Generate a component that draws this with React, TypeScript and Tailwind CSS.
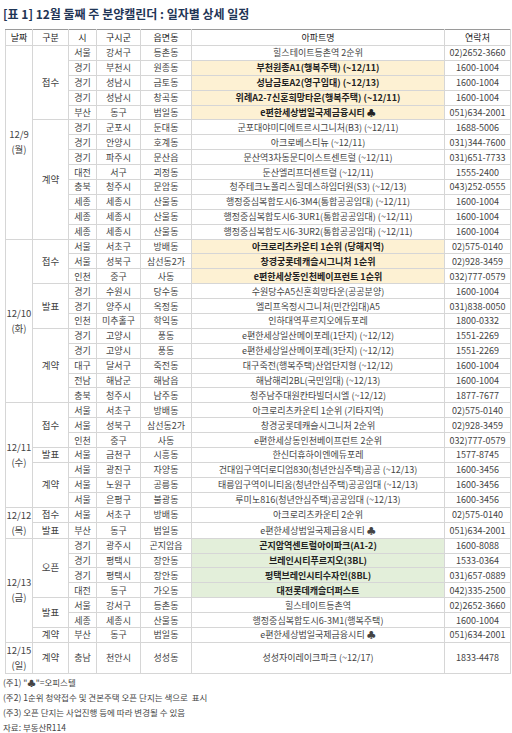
import React from 'react';

type Row = { si: string; gu: string; dong: string; name: string; tel: string; hl?: 'y' | 'g' };
type Sub = { kind: string; rows: Row[] };
type Group = { date: string; day: string; subs: Sub[]; tall?: boolean };

const r = (si: string, gu: string, dong: string, name: string, tel: string, hl?: 'y' | 'g'): Row => ({ si, gu, dong, name, tel, hl });

const groups: Group[] = [
  {
    date: '12/9',
    day: '(월)',
    subs: [
      {
        kind: '접수',
        rows: [
          r('서울', '강서구', '등촌동', '힐스테이트등촌역 2순위', '02)2652-3660'),
          r('경기', '부천시', '원종동', '부천원종A1(행복주택) (~12/11)', '1600-1004', 'y'),
          r('경기', '성남시', '금토동', '성남금토A2(영구임대) (~12/13)', '1600-1004', 'y'),
          r('경기', '성남시', '창곡동', '위례A2-7신혼희망타운(행복주택) (~12/11)', '1600-1004', 'y'),
          r('부산', '동구', '범일동', 'e편한세상범일국제금융시티 ♣', '051)634-2001', 'y'),
        ],
      },
      {
        kind: '계약',
        rows: [
          r('경기', '군포시', '둔대동', '군포대야미디에트르시그니처(B3) (~12/11)', '1688-5006'),
          r('경기', '안양시', '호계동', '아크로베스티뉴 (~12/11)', '031)344-7600'),
          r('경기', '파주시', '문산읍', '문산역3차동문디이스트센트럴 (~12/11)', '031)651-7733'),
          r('대전', '서구', '괴정동', '둔산엘리프더센트럴 (~12/11)', '1555-2400'),
          r('충북', '청주시', '문암동', '청주테크노폴리스힐데스하임더원(S3) (~12/13)', '043)252-0555'),
          r('세종', '세종시', '산울동', '행정중심복합도시6-3M4(통합공공임대) (~12/11)', '1600-1004'),
          r('세종', '세종시', '산울동', '행정중심복합도시6-3UR1(통합공공임대) (~12/11)', '1600-1004'),
          r('세종', '세종시', '산울동', '행정중심복합도시6-3UR2(통합공공임대) (~12/11)', '1600-1004'),
        ],
      },
    ],
  },
  {
    date: '12/10',
    day: '(화)',
    subs: [
      {
        kind: '접수',
        rows: [
          r('서울', '서초구', '방배동', '아크로리츠카운티 1순위 (당해지역)', '02)575-0140', 'y'),
          r('서울', '성북구', '삼선동2가', '창경궁롯데캐슬시그니처 1순위', '02)928-3459', 'y'),
          r('인천', '중구', '사동', 'e편한세상동인천베이프런트 1순위', '032)777-0579', 'y'),
        ],
      },
      {
        kind: '발표',
        rows: [
          r('경기', '수원시', '당수동', '수원당수A5신혼희망타운(공공분양)', '1600-1004'),
          r('경기', '양주시', '옥정동', '엘리프옥정시그니처(민간임대)A5', '031)838-0050'),
          r('인천', '미추홀구', '학익동', '인하대역푸르지오에듀포레', '1800-0332'),
        ],
      },
      {
        kind: '계약',
        rows: [
          r('경기', '고양시', '풍동', 'e편한세상일산메이포레(1단지) (~12/12)', '1551-2269'),
          r('경기', '고양시', '풍동', 'e편한세상일산메이포레(3단지) (~12/12)', '1551-2269'),
          r('대구', '달서구', '죽전동', '대구죽전(행복주택)산업단지형 (~12/12)', '1600-1004'),
          r('전남', '해남군', '해남읍', '해남해리2BL(국민임대) (~12/13)', '1600-1004'),
          r('충북', '청주시', '남주동', '청주남주대원칸타빌더시엘 (~12/12)', '1877-7677'),
        ],
      },
    ],
  },
  {
    date: '12/11',
    day: '(수)',
    subs: [
      {
        kind: '접수',
        rows: [
          r('서울', '서초구', '방배동', '아크로리츠카운티 1순위 (기타지역)', '02)575-0140'),
          r('서울', '성북구', '삼선동2가', '창경궁롯데캐슬시그니처 2순위', '02)928-3459'),
          r('인천', '중구', '사동', 'e편한세상동인천베이프런트 2순위', '032)777-0579'),
        ],
      },
      {
        kind: '발표',
        rows: [r('서울', '금천구', '시흥동', '한신더휴하이엔에듀포레', '1577-8745')],
      },
      {
        kind: '계약',
        rows: [
          r('서울', '광진구', '자양동', '건대입구역더로디엄830(청년안심주택)공공 (~12/13)', '1600-3456'),
          r('서울', '노원구', '공릉동', '태릉입구역이니티움(청년안심주택)공공임대 (~12/13)', '1600-3456'),
          r('서울', '은평구', '불광동', '루미노816(청년안심주택)공공임대 (~12/13)', '1600-3456'),
        ],
      },
    ],
  },
  {
    date: '12/12',
    day: '(목)',
    subs: [
      { kind: '접수', rows: [r('서울', '서초구', '방배동', '아크로리츠카운티 2순위', '02)575-0140')] },
      { kind: '발표', rows: [r('부산', '동구', '범일동', 'e편한세상범일국제금융시티 ♣', '051)634-2001')] },
    ],
  },
  {
    date: '12/13',
    day: '(금)',
    subs: [
      {
        kind: '오픈',
        rows: [
          r('경기', '광주시', '곤지암읍', '곤지암역센트럴아이파크(A1-2)', '1600-8088', 'g'),
          r('경기', '평택시', '장안동', '브레인시티푸르지오(3BL)', '1533-0364', 'g'),
          r('경기', '평택시', '장안동', '평택브레인시티수자인(8BL)', '031)657-0889', 'g'),
          r('대전', '동구', '가오동', '대전롯데캐슬더퍼스트', '042)335-2500', 'g'),
        ],
      },
      {
        kind: '발표',
        rows: [
          r('서울', '강서구', '등촌동', '힐스테이트등촌역', '02)2652-3660'),
          r('세종', '세종시', '산울동', '행정중심복합도시6-3M1(행복주택)', '1600-1004'),
        ],
      },
      { kind: '계약', rows: [r('부산', '동구', '범일동', 'e편한세상범일국제금융시티 ♣', '051)634-2001')] },
    ],
  },
  {
    date: '12/15',
    day: '(일)',
    tall: true,
    subs: [{ kind: '계약', rows: [r('충남', '천안시', '성성동', '성성자이레이크파크  (~12/17)', '1833-4478')] }],
  },
];

const cell = 'border border-[#d6d6d6] text-center align-middle px-0 py-0 whitespace-nowrap';

export default function App() {
  return (
    <div
      className="w-[512px] h-[733px] bg-white pl-[3px] pt-[6px] text-[#444]"
      style={{ fontFamily: '"Noto Sans CJK KR", "Noto Sans", sans-serif' }}
    >
      <h1 className="text-[12px] font-bold leading-[15px] text-[#1f3556]">[표 1] 12월 둘째 주 분양캘린더 : 일자별 상세 일정</h1>

      <table className="mt-[8px] ml-[2px] w-[505px] table-fixed border-collapse text-[9px] leading-[11px]">
        <colgroup>
          <col className="w-[27px]" />
          <col className="w-[36px]" />
          <col className="w-[28px]" />
          <col className="w-[44px]" />
          <col className="w-[51px]" />
          <col className="w-[253px]" />
          <col className="w-[66px]" />
        </colgroup>
        <thead>
          <tr className="h-[16px] text-[#222]">
            {['날짜', '구분', '시', '구시군', '읍면동', '아파트명', '연락처'].map((h) => (
              <th key={h} className={`${cell} border-t-[#9a9a9a] font-normal`}>
                {h}
              </th>
            ))}
          </tr>
        </thead>
        <tbody>
          {groups.map((g) => {
            const total = g.subs.reduce((n, s) => n + s.rows.length, 0);
            return g.subs.map((s, si) =>
              s.rows.map((row, ri) => (
                <tr key={`${g.date}-${si}-${ri}`} className={g.tall ? 'h-[29px]' : 'h-[14.9px]'}>
                  {si === 0 && ri === 0 && (
                    <td rowSpan={total} className={`${cell} text-[9.5px] leading-[15px]`}>
                      {g.date}
                      <br />
                      {g.day}
                    </td>
                  )}
                  {ri === 0 && (
                    <td rowSpan={s.rows.length} className={`${cell} text-[9.5px]`}>
                      {s.kind}
                    </td>
                  )}
                  <td className={cell}>{row.si}</td>
                  <td className={cell}>{row.gu}</td>
                  <td className={cell}>{row.dong}</td>
                  <td
                    className={`${cell} ${
                      row.hl === 'y'
                        ? 'bg-[#fdf1d3] font-semibold text-[#222]'
                        : row.hl === 'g'
                          ? 'bg-[#e3efda] font-semibold text-[#222]'
                          : ''
                    }`}
                  >
                    {row.name}
                  </td>
                  <td className={cell}>{row.tel}</td>
                </tr>
              ))
            );
          })}
        </tbody>
      </table>

      <div className="mt-[1px] text-[8.5px] leading-[15px] text-[#444]">
        <p>(주1) "♣"=오피스텔</p>
        <p>(주2) 1순위 청약접수 및 견본주택 오픈 단지는 색으로&nbsp; 표시</p>
        <p>(주3) 오픈 단지는 사업진행 등에 따라 변경될 수 있음</p>
        <p>자료: 부동산R114</p>
      </div>
    </div>
  );
}
